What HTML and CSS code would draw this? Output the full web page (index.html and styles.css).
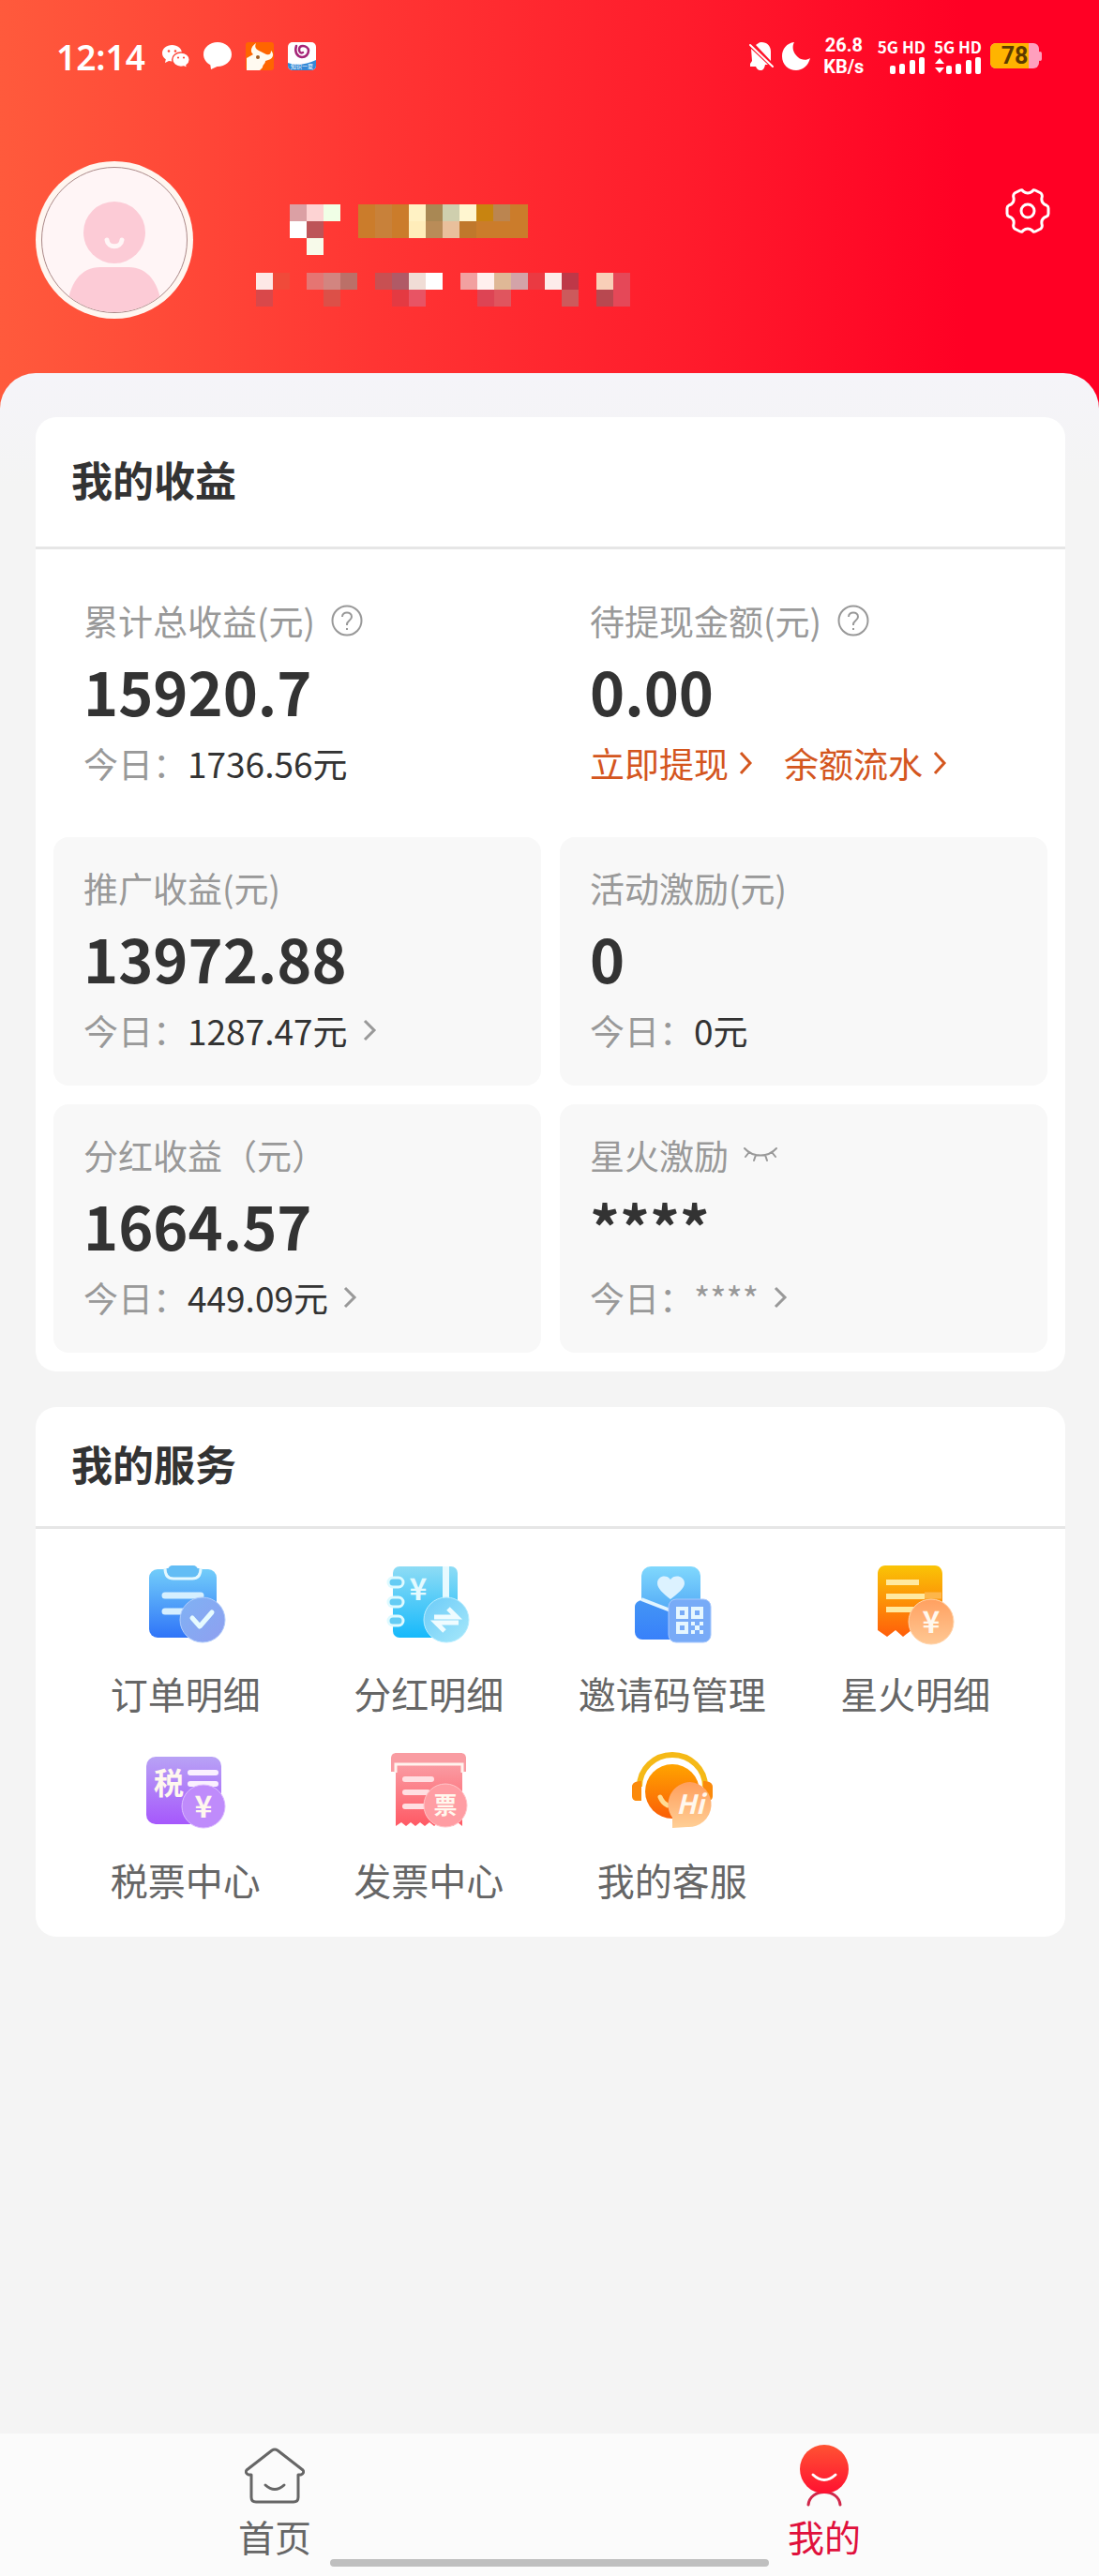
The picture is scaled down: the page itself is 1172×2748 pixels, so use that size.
FILE: index.html
```html
<!DOCTYPE html>
<html lang="zh-CN">
<head>
	<meta charset="utf-8">
	<meta name="viewport" content="width=device-width, initial-scale=1">
	<title>我的</title>
	<link rel="stylesheet" href="styles.css">
</head>
<body>

	<header class="header">
		<!-- status bar -->
		<div class="status">
			<span class="status-time">12:14</span>
			<svg class="status-wechat" width="30" height="28" viewBox="0 0 30 28">
				<path fill="#fff" d="M10.500 2C4.700 2 0 5.800 0 10.700c0 2.700 1.500 5 3.800 6.600L3 21l4-2c1.100.3 2.200.5 3.500.5C16.300 19.500 21 15.600 21 10.700S16.300 2 10.500 2z"/>
				<path fill="#fff" stroke="#fd4637" stroke-width="1.500" d="M20 10c5.200 0 9.300 3.400 9.300 7.700 0 2.400-1.300 4.500-3.300 5.900l.6 3.200-3.600-1.700c-1 .2-2 .3-3 .3-5.200 0-9.300-3.400-9.300-7.700S14.800 10 20 10z"/>
				<g fill="#fd4637"><circle cx="7" cy="8.500" r="1.300"/><circle cx="14" cy="8.500" r="1.300"/><circle cx="17" cy="15.500" r="1.100"/><circle cx="23" cy="15.500" r="1.100"/></g>
			</svg>
			<svg class="status-chat" width="30" height="30" viewBox="0 0 30 30">
				<path fill="#fff" d="M15 0C6.700 0 0 5.600 0 13c0 4.800 2.900 8.900 7.300 11.200L8 29l6.500-3H15c8.300 0 15-5.600 15-13S23.300 0 15 0z"/>
			</svg>
			<svg class="status-app" width="30" height="30" viewBox="0 0 30 30">
				<rect width="30" height="30" rx="3" fill="#ff6500"/>
				<path fill="#fffaf0" d="M1 30V17l7-4C4 10 6 4 11 1c-2 5 0 7 5 9l6 3c3 1 5 0 5-4 4 4 2 9-3 10l-3 1c0 3-3 4-3 7l-3 3z"/>
				<circle cx="13" cy="16" r="2" fill="#a05a20"/>
			</svg>
			<svg class="status-app" width="30" height="30" viewBox="0 0 30 30">
				<rect width="30" height="30" rx="5" fill="#fff"/>
				<path fill="#3388d6" d="M0 22c8 3 20 2 30-3v6a5 5 0 0 1-5 5H5a5 5 0 0 1-5-5z"/>
				<path fill="none" stroke="#a52578" stroke-width="2.500" stroke-linecap="round" d="M9 4c-2 6 0 11 6 12 4 0 7-3 7-7 0-3-3-5-6-5s-4 2-4 4c0 3 2 4 4 3"/>
				<text x="15" y="28" class="tiny-text">知识一夏</text>
			</svg>

			<svg class="status-bell" width="28" height="30" viewBox="0 0 28 30">
				<path fill="#fff" d="M8 3c2-1 3-3 6-3 6 0 10 4 10 10v10zM3 7l18 17h-3c-1 4-2 6-5 6s-4-2-5-4H2v-3l2-3z"/>
				<path stroke="#fff" stroke-width="2" stroke-linecap="round" d="M2 3l24 23"/>
			</svg>
			<svg class="status-moon" width="30" height="30" viewBox="0 0 30 30">
				<path fill="#fff" d="M13 0C5 1 0 7 0 15c0 9 7 15 15 15 7 0 13-5 15-13-4 3-10 2-13-1C12 12 10 5 13 0z"/>
			</svg>
			<span class="status-speed"><span>26.8</span><span>KB/s</span></span>
			<span class="status-signal">
				5G HD
				<svg width="38" height="18" viewBox="0 0 38 18" fill="#fff">
					<rect x="0" y="9" width="6" height="9" rx="2"/><rect x="10" y="7" width="6" height="11" rx="2"/><rect x="21" y="3" width="6" height="15" rx="2"/><rect x="31" y="0" width="6" height="18" rx="2"/>
				</svg>
			</span>
			<span class="status-signal">
				5G HD
				<svg width="50" height="18" viewBox="0 0 50 18" fill="#fff">
					<path d="M0 7l5-6 5 6zM0 11h10l-5 6z"/>
					<rect x="12" y="9" width="6" height="9" rx="2"/><rect x="22" y="7" width="6" height="11" rx="2"/><rect x="33" y="3" width="6" height="15" rx="2"/><rect x="43" y="0" width="6" height="18" rx="2"/>
				</svg>
			</span>
			<svg class="status-battery" width="56" height="32" viewBox="0 -2 56 32">
				<rect x="0" y="0" width="52" height="27" rx="6" fill="#ff9fbd"/>
				<rect x="51" y="9" width="4" height="10" rx="2" fill="#ff9fbd"/>
				<path fill="#ffb400" d="M6 0h35v27H6a6 6 0 0 1-6-6V6a6 6 0 0 1 6-6z"/>
				<text x="26" y="22" class="battery-text">78</text>
			</svg>
		</div>

		<!-- user info -->
		<div class="profile">
			<svg class="avatar" width="168" height="168" viewBox="0 0 168 168">
				<defs><clipPath id="face"><circle cx="84" cy="84" r="77"/></clipPath></defs>
				<circle cx="84" cy="84" r="84" fill="#fff6f0"/>
				<circle cx="84" cy="84" r="77.500" fill="#fff5f6" stroke="#a88" stroke-width="1"/>
				<g clip-path="url(#face)" fill="#fccbd6">
					<circle cx="84" cy="76" r="33"/>
					<path d="M33 168c0-36 14-55 36-55h30c22 0 36 19 36 55z"/>
				</g>
				<path d="M76 84c1 9 15 9 16 0" fill="none" stroke="#fff5f6" stroke-width="5" stroke-linecap="round"/>
			</svg>
			<!-- masked name and id -->
			<svg class="masked" width="414" height="168" viewBox="0 0 414 168" shape-rendering="crispEdges">
				<g>
					<rect x="36" y="46" width="18" height="18" fill="#dba0a4"/><rect x="54" y="46" width="18" height="18" fill="#fdd3d3"/><rect x="72" y="46" width="18" height="18" fill="#f0ffe6"/>
					<rect x="36" y="64" width="18" height="18" fill="#fff"/><rect x="54" y="64" width="18" height="18" fill="#bd5458"/>
					<rect x="54" y="82" width="18" height="18" fill="#f7faea"/>
				</g>
				<g>
					<rect x="109" y="46" width="181" height="36" fill="#cb7c2b"/>
					<rect x="127" y="46" width="18" height="36" fill="#c8813a"/>
					<rect x="163" y="46" width="18" height="18" fill="#fff2c4"/><rect x="181" y="46" width="18" height="18" fill="#a98854"/><rect x="199" y="46" width="18" height="18" fill="#cfcfae"/><rect x="217" y="46" width="18" height="18" fill="#fff6d0"/><rect x="235" y="46" width="18" height="18" fill="#c88410"/><rect x="253" y="46" width="18" height="18" fill="#bb8550"/>
					<rect x="163" y="64" width="18" height="18" fill="#ffedba"/><rect x="181" y="64" width="18" height="18" fill="#b98c58"/><rect x="199" y="64" width="18" height="18" fill="#e9c09c"/><rect x="217" y="64" width="18" height="18" fill="#c0782c"/>
				</g>
				<g>
					<rect x="0" y="119" width="18" height="18" fill="#fde8e6"/><rect x="18" y="119" width="18" height="18" fill="#f04a3a"/><rect x="54" y="119" width="18" height="18" fill="#e57572"/><rect x="72" y="119" width="18" height="18" fill="#d28580"/><rect x="90" y="119" width="18" height="18" fill="#bb7068"/>
					<rect x="127" y="119" width="18" height="18" fill="#c85052"/><rect x="145" y="119" width="18" height="18" fill="#b05a66"/><rect x="163" y="119" width="18" height="18" fill="#f0ddd6"/><rect x="181" y="119" width="18" height="18" fill="#fff"/>
					<rect x="218" y="119" width="18" height="18" fill="#f2a0a0"/><rect x="236" y="119" width="18" height="18" fill="#fff0ee"/><rect x="254" y="119" width="18" height="18" fill="#dfb896"/><rect x="272" y="119" width="18" height="18" fill="#d3a3a8"/><rect x="290" y="119" width="18" height="18" fill="#ea3a42"/>
					<rect x="308" y="119" width="18" height="18" fill="#fdecea"/><rect x="326" y="119" width="18" height="18" fill="#be3848"/><rect x="363" y="119" width="18" height="18" fill="#f8cfb8"/><rect x="381" y="119" width="18" height="36" fill="#e54858"/>
					<rect x="0" y="137" width="18" height="18" fill="#d9484a"/><rect x="72" y="137" width="18" height="18" fill="#dc5048"/><rect x="145" y="137" width="18" height="18" fill="#e43a42"/><rect x="163" y="137" width="18" height="18" fill="#e85464"/>
					<rect x="236" y="137" width="18" height="18" fill="#dd4454"/><rect x="254" y="137" width="18" height="18" fill="#e0555e"/><rect x="326" y="137" width="18" height="18" fill="#cc5a5c"/><rect x="363" y="137" width="18" height="18" fill="#b84850"/>
				</g>
			</svg>
			<button class="settings" type="button" aria-label="设置">
				<svg width="48" height="48" viewBox="0 0 48 48" fill="none" stroke="#fff" stroke-width="3" stroke-linejoin="round">
					<path d="M16 2Q18 1 19 3Q24 7 29 3Q30 1 32 2L38 5Q40 7 39 10Q38 16 44 18Q46 19 46 21V27Q46 29 44 30Q38 32 39 38Q40 41 38 43L32 46Q30 47 29 45Q24 41 19 45Q18 47 16 46L10 43Q8 41 9 38Q10 32 4 30Q2 29 2 27V21Q2 19 4 18Q10 16 9 10Q8 7 10 5Z"/>
					<circle cx="24" cy="24" r="7"/>
				</svg>
			</button>
		</div>
	</header>

	<main class="main">
		<section class="card">
			<h2 class="card-title income-title">我的收益</h2>
			<div class="income">
				<div class="cell plain">
					<div class="row label">累计总收益(元)
						<svg class="help" width="34" height="34" viewBox="0 0 34 34"><circle cx="17" cy="17" r="15.500"/><path d="M12 13c0-6 10-6 10 0 0 4-5 4-5 8v1M17 25v2"/></svg>
					</div>
					<div class="row amount">15920.7</div>
					<div class="row">今日：<span class="today">1736.56元</span></div>
				</div>
				<div class="cell plain">
					<div class="row label">待提现金额(元)
						<svg class="help" width="34" height="34" viewBox="0 0 34 34"><circle cx="17" cy="17" r="15.500"/><path d="M12 13c0-6 10-6 10 0 0 4-5 4-5 8v1M17 25v2"/></svg>
					</div>
					<div class="row amount">0.00</div>
					<div class="row links">
						<a href="#withdraw">立即提现<svg class="arrow" width="16" height="26" viewBox="0 0 16 26"><path d="M2 2l10 11L2 24"/></svg></a>
						<a href="#balance">余额流水<svg class="arrow" width="16" height="26" viewBox="0 0 16 26"><path d="M2 2l10 11L2 24"/></svg></a>
					</div>
				</div>
				<div class="cell">
					<div class="row label">推广收益(元)</div>
					<div class="row amount">13972.88</div>
					<a class="row" href="#promotion">今日：<span class="today">1287.47元</span><svg class="arrow more" width="16" height="26" viewBox="0 0 16 26"><path d="M2 3l10 10L2 23"/></svg></a>
				</div>
				<div class="cell">
					<div class="row label">活动激励(元)</div>
					<div class="row amount">0</div>
					<div class="row">今日：<span class="today">0元</span></div>
				</div>
				<div class="cell">
					<div class="row label">分红收益（元）</div>
					<div class="row amount">1664.57</div>
					<a class="row" href="#dividend">今日：<span class="today">449.09元</span><svg class="arrow more" width="16" height="26" viewBox="0 0 16 26"><path d="M2 3l10 10L2 23"/></svg></a>
				</div>
				<div class="cell">
					<div class="row label">星火激励
						<button class="eye" type="button" aria-label="显示金额">
							<svg width="36" height="18" viewBox="0 0 36 18" fill="none" stroke="#999" stroke-width="2" stroke-linecap="round"><path d="M1 2c9 10 25 10 34 0M6 6l-4 5M13 9l-2 6M23 9l2 6M30 6l4 5"/></svg>
						</button>
					</div>
					<div class="row amount">****</div>
					<a class="row" href="#spark">今日：<span>****</span><svg class="arrow more" width="16" height="26" viewBox="0 0 16 26"><path d="M2 3l10 10L2 23"/></svg></a>
				</div>
			</div>
		</section>

		<section class="card">
			<h2 class="card-title service-title">我的服务</h2>
			<div class="services">
				<a class="service" href="#orders">
					<svg width="94" height="94" viewBox="0 0 94 94">
						<defs>
							<linearGradient id="g1" x2="0" y2="1"><stop stop-color="#72cdfa"/><stop offset="1" stop-color="#2f74f8"/></linearGradient>
							<linearGradient id="g1b" x2="1" y2="1"><stop stop-color="#7fb2f4"/><stop offset="1" stop-color="#8f9ff0"/></linearGradient>
						</defs>
						<rect x="8" y="10" width="72" height="73" rx="9" fill="url(#g1)"/>
						<path d="M25 9c0 7 3 11 9 11h20c6 0 9-4 9-11" fill="#63bdf5" stroke="#e4f8ff" stroke-width="3"/>
						<rect x="28" y="6" width="32" height="12" rx="5" fill="#63bdf5"/>
						<path d="M25 38h38M25 55h20" stroke="#d5efff" stroke-width="7" stroke-linecap="round"/>
						<circle cx="65" cy="64" r="24" fill="url(#g1b)" stroke="#b0ccfb"/>
						<path d="M54 62l8 9 13-15" fill="none" stroke="#e6fbff" stroke-width="5" stroke-linecap="round" stroke-linejoin="round"/>
					</svg>
					订单明细
				</a>
				<a class="service" href="#dividends">
					<svg width="94" height="94" viewBox="0 0 94 94">
						<defs>
							<linearGradient id="g2" x2="0" y2="1"><stop stop-color="#8edcf5"/><stop offset="1" stop-color="#16b9fb"/></linearGradient>
							<linearGradient id="g2b" x2="1" y2="1"><stop stop-color="#6ccbf8"/><stop offset="1" stop-color="#a6e8fa"/></linearGradient>
						</defs>
						<rect x="9" y="7" width="69" height="76" rx="7" fill="url(#g2)"/>
						<path d="M62 7h7v40h-7z" fill="#e6faff"/>
						<g fill="#64ccf4" stroke="#defaff" stroke-width="3"><rect x="4" y="19" width="16" height="10" rx="5"/><rect x="4" y="40" width="16" height="10" rx="5"/><rect x="4" y="60" width="16" height="10" rx="5"/></g>
						<text x="36" y="43" class="icon-text cyan">¥</text>
						<circle cx="66" cy="64" r="24" fill="url(#g2b)" stroke="#b8edff"/>
						<path d="M53 61h24l-9-9M79 67H55l9 9" fill="none" stroke="#effcff" stroke-width="5"/>
					</svg>
					分红明细
				</a>
				<a class="service" href="#invite">
					<svg width="94" height="94" viewBox="0 0 94 94">
						<defs>
							<linearGradient id="g3" x2="0" y2="1"><stop stop-color="#80d8fd"/><stop offset="1" stop-color="#3f95f3"/></linearGradient>
							<linearGradient id="g3b" x2="0" y2="1"><stop stop-color="#4395f5"/><stop offset="1" stop-color="#3880fa"/></linearGradient>
						</defs>
						<rect x="14" y="7" width="63" height="70" rx="10" fill="url(#g3)"/>
						<path d="M15 43l45 17v25H15a8 8 0 0 1-8-8V50c0-4 4-7 8-7z" fill="url(#g3b)"/>
						<path d="M14 42l31 12" stroke="#e2f5ff" stroke-width="4"/>
						<path d="M45 42C37 36 31 30 31 25c0-8 10-10 14-4 4-6 15-4 15 4 0 5-7 11-15 17z" fill="#dcf2ff"/>
						<rect x="43" y="42" width="45" height="46" rx="8" fill="#78abf7" stroke="#a6c8fd"/>
						<path fill="#e6f7ff" fill-rule="evenodd" d="M51 50h13v13H51zm4 4v5h5v-5zM67 50h13v13H67zm4 4v5h5v-5zM51 66h13v13H51zm4 4v5h5v-5z"/>
						<path fill="#e6f7ff" d="M67 66h4v4h5v-4h4v4h-4v5h4v4h-4v-4h-5v4h-4v-4h4v-5h-4z"/>
					</svg>
					邀请码管理
				</a>
				<a class="service" href="#spark-detail">
					<svg width="94" height="94" viewBox="0 0 94 94">
						<defs>
							<linearGradient id="g4" x2="0" y2="1"><stop stop-color="#fac406"/><stop offset="1" stop-color="#ff5e0a"/></linearGradient>
							<linearGradient id="g4b" x2="0" y2="1"><stop stop-color="#ffa060"/><stop offset="1" stop-color="#ffc894"/></linearGradient>
						</defs>
						<path d="M15 6h53c5 0 8 4 8 9v60l-7 7-8-7-9 7-9-7-9 7-8-7-9 7-10-7V15c0-5 3-9 8-9z" fill="url(#g4)"/>
						<path d="M16 24h35M16 39h41M16 53h32" stroke="#ffe9a0" stroke-width="6"/>
						<path d="M57 38h18" stroke="#fdb64a" stroke-width="7"/>
						<circle cx="64" cy="66" r="24" fill="url(#g4b)" stroke="#ffd5ac"/>
						<text x="64" y="78" class="icon-text">¥</text>
					</svg>
					星火明细
				</a>
				<a class="service" href="#tax">
					<svg width="94" height="94" viewBox="0 0 94 94">
						<defs>
							<linearGradient id="g5" x2="0" y2="1"><stop stop-color="#b8a2f5"/><stop offset="1" stop-color="#a658fc"/></linearGradient>
						</defs>
						<rect x="5" y="11" width="80" height="72" rx="10" fill="url(#g5)"/>
						<text x="29" y="51" class="icon-text">税</text>
						<path d="M52 28h27M52 40h27" stroke="#faf0ff" stroke-width="6" stroke-linecap="round"/>
						<circle cx="66" cy="64" r="23" fill="#bf8bfb" stroke="#dcbcff"/>
						<text x="66" y="76" class="icon-text">¥</text>
					</svg>
					税票中心
				</a>
				<a class="service" href="#invoice">
					<svg width="94" height="94" viewBox="0 0 94 94">
						<defs>
							<linearGradient id="g6" x2="0" y2="1"><stop stop-color="#fa9ca3"/><stop offset="1" stop-color="#ff5964"/></linearGradient>
						</defs>
						<path d="M7 27V13c0-4 2-6 6-6h68c4 0 6 2 6 6v14z" fill="#f99ca2"/>
						<path d="M12 19H83V85L78 81L73 85L68 81L63 85L58 81L53 85L48 81L43 85L38 81L33 85L28 81L23 85L18 81L12 85Z" fill="url(#g6)"/>
						<path d="M12 28v-9h71v9" fill="none" stroke="#fff3ee" stroke-width="3"/>
						<path d="M22 35h28M22 49h24M22 64h22" stroke="#ffdfe2" stroke-width="6" stroke-linecap="round"/>
						<circle cx="65" cy="63" r="23" fill="#ff9da3" stroke="#ffc5c8"/>
						<text x="65" y="72" class="icon-text small">票</text>
					</svg>
					发票中心
				</a>
				<a class="service" href="#support">
					<svg width="94" height="94" viewBox="0 0 94 94">
						<defs>
							<linearGradient id="g7" x2="0" y2="1"><stop stop-color="#ffa400"/><stop offset="1" stop-color="#fa5e08"/></linearGradient>
							<linearGradient id="g7b" x2="0" y2="1"><stop stop-color="#ff9e5c"/><stop offset="1" stop-color="#ffcf96"/></linearGradient>
						</defs>
						<path d="M12 43a35 34 0 0 1 70 0" fill="none" stroke="#f5b916" stroke-width="6"/>
						<path d="M14 37v21H9c-3 0-5-2-5-5V43c0-4 4-6 10-6zM80 37v21h5c3 0 5-2 5-5V43c0-4-4-6-10-6z" fill="#fb8a0b"/>
						<circle cx="47" cy="48" r="29" fill="url(#g7)"/>
						<path d="M34 54c2 5 4 7 8 9" fill="none" stroke="#ffdc94" stroke-width="5" stroke-linecap="round"/>
						<path d="M66 38a24 24 0 1 1-3 48l-16 1V76a24 24 0 0 1 19-38z" fill="url(#g7b)"/>
						<text x="66" y="72" class="icon-text hi">Hi</text>
					</svg>
					我的客服
				</a>
			</div>
		</section>
	</main>

	<nav class="tabbar">
		<a class="tab" href="#home">
			<svg width="64" height="66" viewBox="0 0 64 66" fill="none" stroke="#666" stroke-width="3" stroke-linecap="round" stroke-linejoin="round">
				<path d="M29 6q3-2 6 0l27 21q2 3-2 5h-3v24q0 5-5 5H12q-5 0-5-5V32H4q-4-2-2-5z"/>
				<path d="M22 43q10 9 20 0"/>
			</svg>
			首页
		</a>
		<a class="tab active" href="#mine">
			<svg width="64" height="66" viewBox="0 0 64 66">
				<defs><linearGradient id="g8" x2="0" y2="1"><stop stop-color="#ff5333"/><stop offset="1" stop-color="#ff1030"/></linearGradient></defs>
				<path d="M15 64c2-18 32-18 34 0" fill="none" stroke="#d0284a" stroke-width="3" stroke-linecap="round"/>
				<circle cx="32" cy="26" r="26" fill="url(#g8)"/>
				<path d="M20 32q12 11 24 0" fill="none" stroke="#fff" stroke-width="3" stroke-linecap="round"/>
			</svg>
			我的
		</a>
		<span class="home-bar"></span>
	</nav>

</body>
</html>
```
FILE: styles.css
```css
* {
	box-sizing: border-box;
}

body {
	margin: 0;
	min-height: 100vh;
	display: flex;
	flex-direction: column;
	background-color: #f4f4f4;
	font-family: "Noto Sans CJK SC", "Noto Sans", sans-serif;
	font-size: 37px;
	color: #333;
}

a {
	color: inherit;
	text-decoration: none;
}

button {
	border: none;
	background: none;
	padding: 0;
}

svg {
	display: block;
	flex: none;
}

/* header */
.header {
	padding-bottom: 98px;
	background: linear-gradient(90deg, #ff5a3c 0%, #ff3533 34%, #ff1c2c 62%, #ff0024 88%);
}

.status {
	display: flex;
	align-items: center;
	height: 120px;
	padding: 0 60px;
	color: #fff;
}

.status-time {
	font-family: "Noto Sans", sans-serif;
	font-size: 37px;
	font-weight: 600;
	margin-right: 18px;
}

.status-chat {
	margin-left: 14px;
}

.status-app {
	margin-left: 15px;
}

.status-bell {
	margin-left: auto;
}

.status-moon {
	margin-left: 8px;
}

.status-speed {
	display: flex;
	flex-direction: column;
	align-items: center;
	min-width: 48px;
	margin: 0 12px;
	font-family: Roboto, sans-serif;
	font-size: 20px;
	font-weight: bold;
	line-height: 23px;
}

.status-signal {
	display: flex;
	flex-direction: column;
	align-items: flex-end;
	gap: 2px;
	margin-right: 9px;
	font-size: 17px;
	font-weight: bold;
	line-height: 18px;
}

.tiny-text {
	font-size: 6px;
	fill: #fff;
	text-anchor: middle;
}

.battery-text {
	font-family: Roboto, sans-serif;
	font-size: 25px;
	font-weight: bold;
	fill: #5c3a00;
	text-anchor: middle;
}

.profile {
	display: flex;
	align-items: flex-start;
	padding: 52px 52px 0 38px;
}

.masked {
	margin-left: 67px;
}

.settings {
	margin-top: 29px;
	margin-left: auto;
}

/* content */
.main {
	flex: 1;
	margin-top: -40px;
	padding: 47px 36px 38px 38px;
	border-radius: 38px 38px 0 0;
	background: linear-gradient(#f5f4f9, #f4f4f4 120px);
}

.card {
	margin-bottom: 38px;
	border-radius: 22px;
	background-color: #fff;
}

.card-title {
	margin: 0;
	padding: 0 38px 6px;
	border-bottom: 3px solid #e6e6e6;
	font-size: 44px;
	font-weight: bold;
}

.income-title {
	line-height: 132px;
}

.service-title {
	line-height: 121px;
}

.income {
	display: grid;
	grid-template-columns: 1fr 1fr;
	gap: 20px;
	padding: 22px 19px 20px;
}

.cell {
	padding: 16px 32px 21px;
	border-radius: 16px;
	background-color: #f8f8f8;
}

.cell.plain {
	background-color: #fff;
}

.row {
	display: flex;
	align-items: center;
	height: 76px;
	color: #999;
}

.amount {
	padding-bottom: 4px;
	font-size: 63px;
	font-weight: bold;
	color: #333;
}

.today {
	color: #333;
}

.help {
	margin-left: 17px;
	fill: none;
	stroke: #999;
	stroke-width: 2;
}

.eye {
	margin-left: 16px;
}

.links {
	gap: 32px;
	color: #d4561e;
}

.links a {
	display: flex;
	align-items: center;
	gap: 11px;
}

.arrow {
	fill: none;
	stroke: currentColor;
	stroke-width: 3;
}

.more {
	margin-left: 16px;
}

/* services */
.services {
	display: grid;
	grid-template-columns: repeat(4, 1fr);
	row-gap: 27px;
	padding: 33px 30px 31px;
}

.service {
	display: flex;
	flex-direction: column;
	align-items: center;
	gap: 18px;
	font-size: 40px;
	line-height: 60px;
	color: #666;
}

.icon-text {
	font-size: 32px;
	font-weight: bold;
	fill: #fff8ee;
	text-anchor: middle;
}

.icon-text.cyan {
	fill: #e4faff;
}

.icon-text.small {
	font-size: 25px;
}

.icon-text.hi {
	font-size: 28px;
	font-style: italic;
}

/* bottom tabs */
.tabbar {
	position: relative;
	display: flex;
	height: 152px;
	padding-top: 12px;
	background-color: #fbfbfb;
}

.tab {
	flex: 1;
	display: flex;
	flex-direction: column;
	align-items: center;
	gap: 3px;
	font-size: 39px;
	line-height: 56px;
	color: #666;
}

.tab.active {
	color: #e0103c;
}

.home-bar {
	position: absolute;
	left: 30%;
	right: 30%;
	bottom: 10px;
	height: 8px;
	border-radius: 4px;
	background-color: #bfbfbf;
}
```
